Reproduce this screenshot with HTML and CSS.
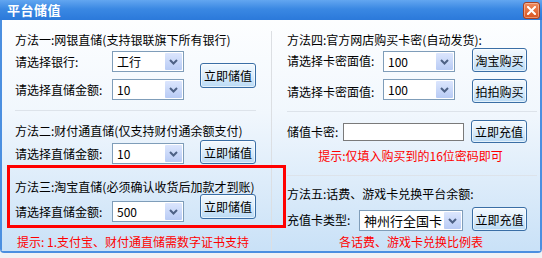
FILE: index.html
```html
<!DOCTYPE html>
<html lang="zh-CN">
<head>
    <meta charset="UTF-8">
    <meta name="viewport" content="width=device-width, initial-scale=1.0">
    <title>平台储值</title>
    <link rel="stylesheet" href="styles.css">
</head>
<body>
    <div class="window">
        <div class="titlebar">
            <span class="title">平台储值</span>
            <span class="close">
                <svg width="9" height="9" viewBox="0 0 9 9"><path d="M1 1L8 8M8 1L1 8" stroke="#fff" stroke-width="2" stroke-linecap="square"/></svg>
            </span>
        </div>

        <div class="client">
            <!-- 左側：網銀 / 財付通 / 淘寶 -->
            <div class="col col-left">
                <div class="heading">方法一:网银直储(支持银联旗下所有银行)</div>
                <div class="form form-1">
                    <div class="fields">
                        <div class="row">
                            <span class="label w97">请选择银行:</span>
                            <div class="select w72"><span>工行</span><i class="arrow"><svg width="9" height="6" viewBox="0 0 9 6"><path d="M1 1L4.5 4.5L8 1" fill="none" stroke="#4d6185" stroke-width="2"/></svg></i></div>
                        </div>
                        <div class="row">
                            <span class="label w97">请选择直储金额:</span>
                            <div class="select w72"><span>10</span><i class="arrow"><svg width="9" height="6" viewBox="0 0 9 6"><path d="M1 1L4.5 4.5L8 1" fill="none" stroke="#4d6185" stroke-width="2"/></svg></i></div>
                        </div>
                    </div>
                    <button class="btn btn-left">立即储值</button>
                </div>

                <div class="sep"></div>

                <div class="heading h2">方法二:财付通直储(仅支持财付通余额支付)</div>
                <div class="form form-2">
                    <div class="row">
                        <span class="label w97">请选择直储金额:</span>
                        <div class="select w72"><span>10</span><i class="arrow"><svg width="9" height="6" viewBox="0 0 9 6"><path d="M1 1L4.5 4.5L8 1" fill="none" stroke="#4d6185" stroke-width="2"/></svg></i></div>
                    </div>
                    <button class="btn btn-left">立即储值</button>
                </div>

                <div class="heading h3">方法三:淘宝直储(必须确认收货后加款才到账)</div>
                <div class="form form-3">
                    <div class="row">
                        <span class="label w97">请选择直储金额:</span>
                        <div class="select w72"><span>500</span><i class="arrow"><svg width="9" height="6" viewBox="0 0 9 6"><path d="M1 1L4.5 4.5L8 1" fill="none" stroke="#4d6185" stroke-width="2"/></svg></i></div>
                    </div>
                    <button class="btn btn-left">立即储值</button>
                </div>

                <div class="tip tip-left">提示: 1.支付宝、财付通直储需数字证书支持</div>
            </div>

            <div class="divider"></div>

            <!-- 右側：卡密 / 兌換 -->
            <div class="col col-right">
                <div class="heading">方法四:官方网店购买卡密(自动发货):</div>
                <div class="line line-a">
                    <span class="label w96">请选择卡密面值:</span>
                    <div class="select w72 down"><span>100</span><i class="arrow"><svg width="9" height="6" viewBox="0 0 9 6"><path d="M1 1L4.5 4.5L8 1" fill="none" stroke="#4d6185" stroke-width="2"/></svg></i></div>
                    <button class="btn btn-right">淘宝购买</button>
                </div>
                <div class="line line-b">
                    <span class="label w96">请选择卡密面值:</span>
                    <div class="select w72 up"><span>100</span><i class="arrow"><svg width="9" height="6" viewBox="0 0 9 6"><path d="M1 1L4.5 4.5L8 1" fill="none" stroke="#4d6185" stroke-width="2"/></svg></i></div>
                    <button class="btn btn-right">拍拍购买</button>
                </div>

                <div class="sep sep-r1"></div>

                <div class="line line-card">
                    <span class="label w56">储值卡密:</span>
                    <input class="input" type="text">
                    <button class="btn btn-card">立即充值</button>
                </div>
                <div class="tip tip-center">提示:仅填入购买到的16位密码即可</div>

                <div class="sep sep-r2"></div>

                <div class="heading h5">方法五:话费、游戏卡兑换平台余额:</div>
                <div class="line line-c">
                    <span class="label w72">充值卡类型:</span>
                    <div class="select w104 down"><span>神州行全国卡</span><i class="arrow"><svg width="9" height="6" viewBox="0 0 9 6"><path d="M1 1L4.5 4.5L8 1" fill="none" stroke="#4d6185" stroke-width="2"/></svg></i></div>
                    <button class="btn btn-c">立即充值</button>
                </div>
                <div class="tip tip-center tip-link">各话费、游戏卡兑换比例表</div>
            </div>

            <div class="highlight"></div>
        </div>
    </div>
</body>
</html>
```

FILE: styles.css
```css
:root {
    --title-top: #5ea3ef;
    --title-bottom: #2c7adb;
    --frame: #4b8fe0;
    --sep: #dde3ea;
    --red: #ff0000;
}

body {
    margin: 0;
    background: #f1f2f4;
    font-family: 'Noto Sans CJK SC', 'Liberation Sans', sans-serif;
    font-size: 12px;
    color: #000;
}

.window {
    width: 542px;
    height: 253px;
    display: flex;
    flex-direction: column;
    box-sizing: border-box;
    border-bottom: 2px solid var(--frame);
    border-radius: 0 0 4px 4px;
    overflow: hidden;
}

/* 標題列 */
.titlebar {
    height: 20px;
    flex: none;
    display: flex;
    align-items: center;
    justify-content: space-between;
    padding: 0 2px 0 7px;
    background: linear-gradient(#63a6f0, #3a88e3 45%, #2b79da);
}

.title {
    color: #fff;
    font-weight: bold;
    font-size: 13px;
    line-height: 20px;
    letter-spacing: 0.5px;
}

.close {
    width: 15px;
    height: 15px;
    display: flex;
    align-items: center;
    justify-content: center;
    border: 1px solid #a84121;
    border-radius: 3px;
    background: linear-gradient(#f08b5e, #d9541f);
    box-shadow: inset 0 0 0 1px rgba(255, 255, 255, 0.35);
}

.client {
    position: relative;
    flex: 1;
    display: flex;
    border-left: 2px solid var(--frame);
    border-right: 2px solid var(--frame);
    background: linear-gradient(#fdfeff, #f1f7fd 40%, #c9e1f7);
}

.col {
    display: flex;
    flex-direction: column;
    padding-top: 10px;
}

.col-left {
    width: 269px;
    box-sizing: border-box;
    padding-left: 13px;
    padding-right: 15px;
}

.col-right {
    flex: 1;
    padding-left: 15px;
    padding-right: 1px;
}

.divider {
    width: 1px;
    margin-top: 11px;
    margin-bottom: 1px;
    background: #dcdfe3;
}

.heading {
    height: 20px;
    line-height: 20px;
    white-space: nowrap;
}

.h2 { margin-top: 5px; }
.h3 { margin-top: 13px; }
.h5 { margin-top: 4px; }

.sep {
    height: 1px;
    margin: 10px 0 5px;
    background: var(--sep);
}

.form {
    display: flex;
    align-items: center;
}

.form-1 { margin-top: 1px; }
.form-2 { margin-top: -1px; align-items: flex-end; }
.form-3 { margin-top: -3px; align-items: flex-start; }
.form-3 .row { margin-top: 7px; }

.fields {
    display: flex;
    flex-direction: column;
    gap: 7px;
}

.row, .line {
    display: flex;
    align-items: center;
    white-space: nowrap;
}

.row { height: 21px; }

.label { flex: none; }
.w96 { width: 96px; }
.w97 { width: 97px; }
.w56 { width: 56px; }
.w72 { width: 72px; }

/* 下拉框 */
.select {
    height: 21px;
    box-sizing: border-box;
    display: flex;
    align-items: center;
    justify-content: space-between;
    border: 1px solid #7f9db9;
    background: #fff;
    padding: 1px 1px 1px 4px;
}

.select.w72 { width: 72px; }
.select.w104 { width: 104px; font-size: 13px; }

.select span {
    line-height: 17px;
}

.arrow {
    width: 17px;
    height: 17px;
    display: flex;
    align-items: center;
    justify-content: center;
    background: linear-gradient(#dce6fd, #b8cbf5);
    border-radius: 1px;
}

.down { align-self: flex-end; }
.up { align-self: flex-start; }

/* 按鈕 */
.btn {
    flex: none;
    height: 24px;
    padding: 0;
    font-family: inherit;
    font-size: 12px;
    color: #000;
    border: 1px solid #3a6ea5;
    border-radius: 3px;
    background: linear-gradient(#f3f9fe, #dcedfb 50%, #b9daf5);
    box-shadow: inset 0 0 0 1px rgba(255, 255, 255, 0.6);
}

.btn-left {
    width: 56px;
    height: 25px;
    margin-left: 16px;
}

.form-2 .btn-left { height: 24px; }

.btn-right {
    width: 55px;
    margin-left: 17px;
}

.line-a {
    height: 24px;
    margin-top: -2px;
}

.line-b {
    height: 24px;
    margin-top: 7px;
}

.sep-r1 { margin: 8px 2px 8px 0; }
.sep-r2 { margin: 9px 2px 4px 0; }

.line-card { height: 23px; }

.input {
    width: 121px;
    height: 18px;
    box-sizing: border-box;
    border: 1px solid #7a7a7a;
    background: #fff;
    margin: 0;
    padding: 0;
}

.btn-card {
    width: 56px;
    height: 23px;
    margin-left: 7px;
}

.line-c {
    height: 24px;
    margin-top: 3px;
}

.btn-c {
    width: 55px;
    margin-left: 9px;
}

.tip {
    height: 20px;
    line-height: 20px;
    color: var(--red);
    white-space: nowrap;
}

.tip-left { margin-top: 10px; padding-left: 2px; }

.tip-center {
    margin-top: 3px;
    padding-right: 5px;
    text-align: center;
}

.tip-link { margin-top: 1px; padding-right: 4px; }

/* 紅框提示 */
.highlight {
    position: absolute;
    left: 5px;
    top: 145px;
    width: 279px;
    height: 63px;
    box-sizing: border-box;
    border: 3px solid var(--red);
    pointer-events: none;
}
```
